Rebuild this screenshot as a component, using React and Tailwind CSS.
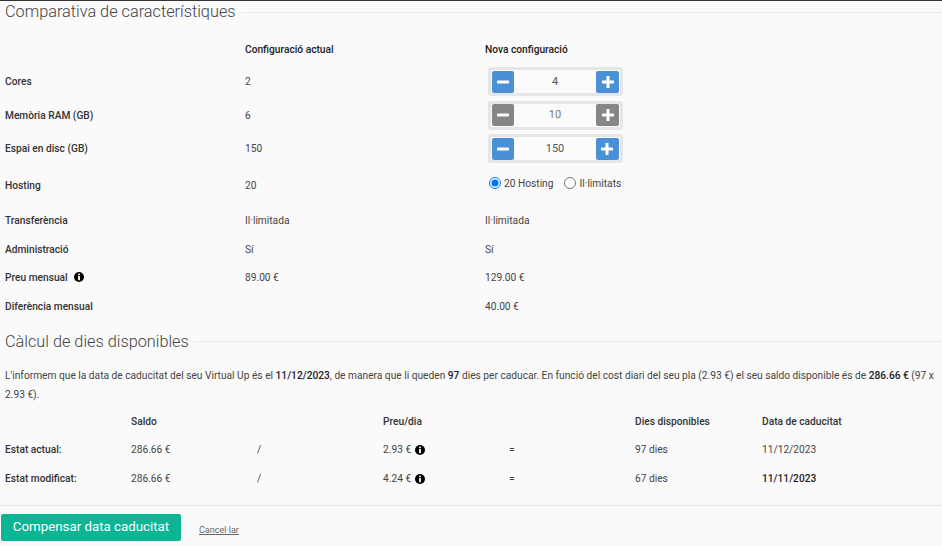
const rows = [
    { label: 'Transferència', actual: 'Il·limitada', next: 'Il·limitada', height: 'h-[30px]' },
    { label: 'Administració', actual: 'Sí', next: 'Sí', height: 'h-[28px]' },
    { label: 'Preu mensual', actual: '89.00 €', next: '129.00 €', height: 'h-[28px]', info: true },
    { label: 'Diferència mensual', actual: '', next: '40.00 €', height: 'h-[30px]' },
];

function InfoIcon({ className = '' }) {
    return (
        <svg viewBox="0 0 10 10" className={`h-[10px] w-[10px] ${className}`}>
            <circle cx="5" cy="5" r="5" fill="#000" />
            <rect x="4.1" y="1.7" width="1.8" height="1.5" fill="#fff" />
            <rect x="4.1" y="4" width="1.8" height="4.2" fill="#fff" />
        </svg>
    );
}

function SectionTitle({ children }) {
    return (
        <div className="flex items-center gap-[5px] pl-[5px]">
            <h2 className="whitespace-nowrap text-[16.3px] font-light leading-[22px] text-[#444]">{children}</h2>
            <div className="h-px flex-1 bg-[#eaeaea]" />
        </div>
    );
}

function Spinner({ value, disabled }) {
    const color = disabled ? 'bg-[#868686]' : 'bg-[#4a90d6]';
    return (
        <div className="flex h-[29px] w-[135px] items-center justify-between rounded-[3px] border-[3px] border-[#e6e6e6] bg-[#fbfbfb] px-px">
            <button className={`flex h-[22px] w-[22px] items-center justify-center rounded-[2px] ${color}`}>
                <svg viewBox="0 0 14 14" className="h-[14px] w-[14px]">
                    <rect x="1" y="5.5" width="12" height="3" rx="0.5" fill="#fff" />
                </svg>
            </button>
            <span className={`text-[11px] ${disabled ? 'text-[#777]' : 'text-[#555]'}`}>{value}</span>
            <button className={`flex h-[22px] w-[23px] items-center justify-center rounded-[2px] ${color}`}>
                <svg viewBox="0 0 14 14" className="h-[14px] w-[14px]">
                    <rect x="1" y="5.5" width="12" height="3" rx="0.5" fill="#fff" />
                    <rect x="5.5" y="1" width="3" height="12" rx="0.5" fill="#fff" />
                </svg>
            </button>
        </div>
    );
}

function FeatureRow({ label, actual, children, height, info }) {
    return (
        <div className={`grid grid-cols-[240px_240px_1fr] items-center pl-[5px] ${height}`}>
            <div className="flex items-center gap-[6px] font-medium text-[#333]">
                {label}
                {info && <InfoIcon />}
            </div>
            <div>{actual}</div>
            <div>{children}</div>
        </div>
    );
}

function CalcRow({ label, saldo, preu, dies, data, strong, height }) {
    return (
        <div className={`grid grid-cols-[126px_126px_126px_126px_126px_127px_1fr] items-center pl-[5px] ${height}`}>
            <div className="font-medium text-[#333]">{label}</div>
            <div>{saldo}</div>
            <div>/</div>
            <div className="flex items-center gap-1">
                {preu}
                <InfoIcon />
            </div>
            <div>=</div>
            <div>{dies}</div>
            <div className={strong ? 'font-medium text-[#222]' : ''}>{data}</div>
        </div>
    );
}

export default function App() {
    return (
        <div className="h-[546px] w-[942px] overflow-hidden border-t border-[#333] bg-[#fafafa] font-['Roboto',sans-serif] text-[10.2px] text-[#444]">
            <SectionTitle>Comparativa de característiques</SectionTitle>

            <div className="mt-[11px] grid h-[31px] grid-cols-[240px_240px_1fr] items-center pl-[5px] font-medium text-[#222]">
                <div />
                <div>Configuració actual</div>
                <div>Nova configuració</div>
            </div>

            <FeatureRow label="Cores" actual="2" height="h-[33.5px]">
                <div className="pl-[3px]"><Spinner value="4" /></div>
            </FeatureRow>
            <FeatureRow label="Memòria RAM (GB)" actual="6" height="h-[33.5px]">
                <div className="pl-[3px]"><Spinner value="10" disabled /></div>
            </FeatureRow>
            <FeatureRow label="Espai en disc (GB)" actual="150" height="h-[33.5px]">
                <div className="pl-[3px]"><Spinner value="150" /></div>
            </FeatureRow>
            <FeatureRow label="Hosting" actual="20" height="h-[40px]">
                <div className="-mt-[4px] flex items-center pl-[4px]">
                    <label className="flex items-center gap-[3px]">
                        <input type="radio" name="hosting" defaultChecked className="m-0 h-[12px] w-[12px]" />
                        20 Hosting
                    </label>
                    <label className="ml-[11px] flex items-center gap-[3px]">
                        <input type="radio" name="hosting" className="m-0 h-[12px] w-[12px]" />
                        Il·limitats
                    </label>
                </div>
            </FeatureRow>

            {rows.map((row) => (
                <FeatureRow key={row.label} label={row.label} actual={row.actual} height={row.height} info={row.info}>
                    {row.next}
                </FeatureRow>
            ))}

            <div className="mt-[9px]">
                <SectionTitle>Càlcul de dies disponibles</SectionTitle>
            </div>

            <p className="mt-[13px] pl-[5px] pr-1 leading-[19px]">
                L'informem que la data de caducitat del seu Virtual Up és el <span className="font-medium text-[#222]">11/12/2023</span>, de manera que li queden <span className="font-medium text-[#222]">97</span> dies per caducar. En funció del cost diari del seu pla (2.93 €) el seu saldo disponible és de <span className="font-medium text-[#222]">286.66 €</span> (97 x 2.93 €).
            </p>

            <div className="mt-[4px] grid h-[28px] grid-cols-[126px_126px_126px_126px_126px_127px_1fr] items-center pl-[5px] font-medium text-[#333]">
                <div />
                <div>Saldo</div>
                <div />
                <div>Preu/dia</div>
                <div />
                <div>Dies disponibles</div>
                <div>Data de caducitat</div>
            </div>
            <CalcRow label="Estat actual:" saldo="286.66 €" preu="2.93 €" dies="97 dies" data="11/12/2023" height="h-[29px]" />
            <CalcRow label="Estat modificat:" saldo="286.66 €" preu="4.24 €" dies="67 dies" data="11/11/2023" strong height="h-[29px]" />

            <div className="mt-[11px] flex items-center border-t border-[#e8e8e8] pl-px pt-2">
                <button className="h-[27px] w-[180px] rounded-[2px] bg-[#0db594] text-[13.3px] text-white">Compensar data caducitat</button>
                <a href="#" className="ml-[18px] mt-[7px] text-[9px] text-[#666] underline">Cancel·lar</a>
            </div>
        </div>
    );
}
